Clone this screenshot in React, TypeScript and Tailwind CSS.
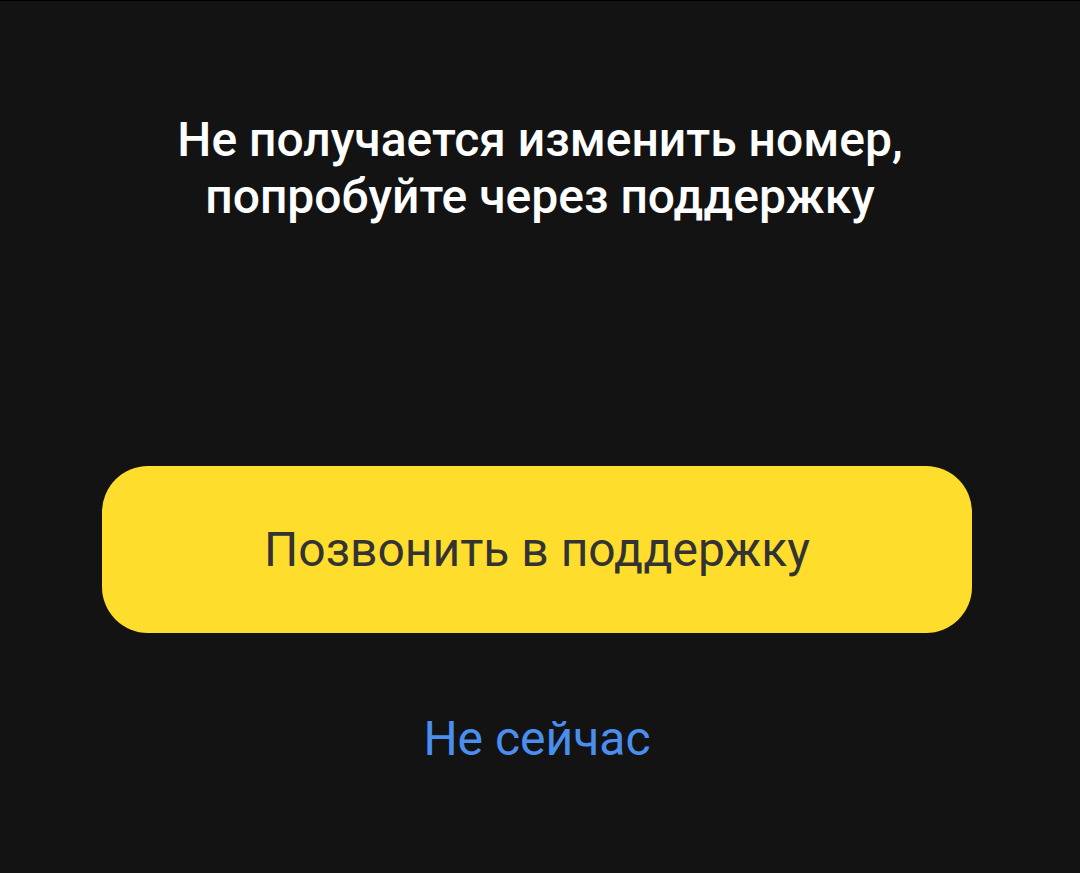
export default function App() {
  return (
    <div
      className="w-[1080px] h-[873px] bg-[#131313] border-t border-black flex flex-col items-center"
      style={{ fontFamily: "Roboto, 'Noto Sans', sans-serif" }}
    >
      <h1 className="mt-[110px] text-center text-white font-medium text-[48px] leading-[57px]">
        Не получается изменить номер,
        <br />
        попробуйте через поддержку
      </h1>
      <button className="mt-[241px] mr-[6px] w-[870px] h-[167px] rounded-[46px] bg-[#FFDD2D] text-[#333333] text-[48px] font-normal flex items-center justify-center">
        Позвонить в поддержку
      </button>
      <button className="mt-[78px] mr-[6px] text-[#4A8FEF] text-[48px] font-normal leading-[56px]">
        Не сейчас
      </button>
    </div>
  );
}
